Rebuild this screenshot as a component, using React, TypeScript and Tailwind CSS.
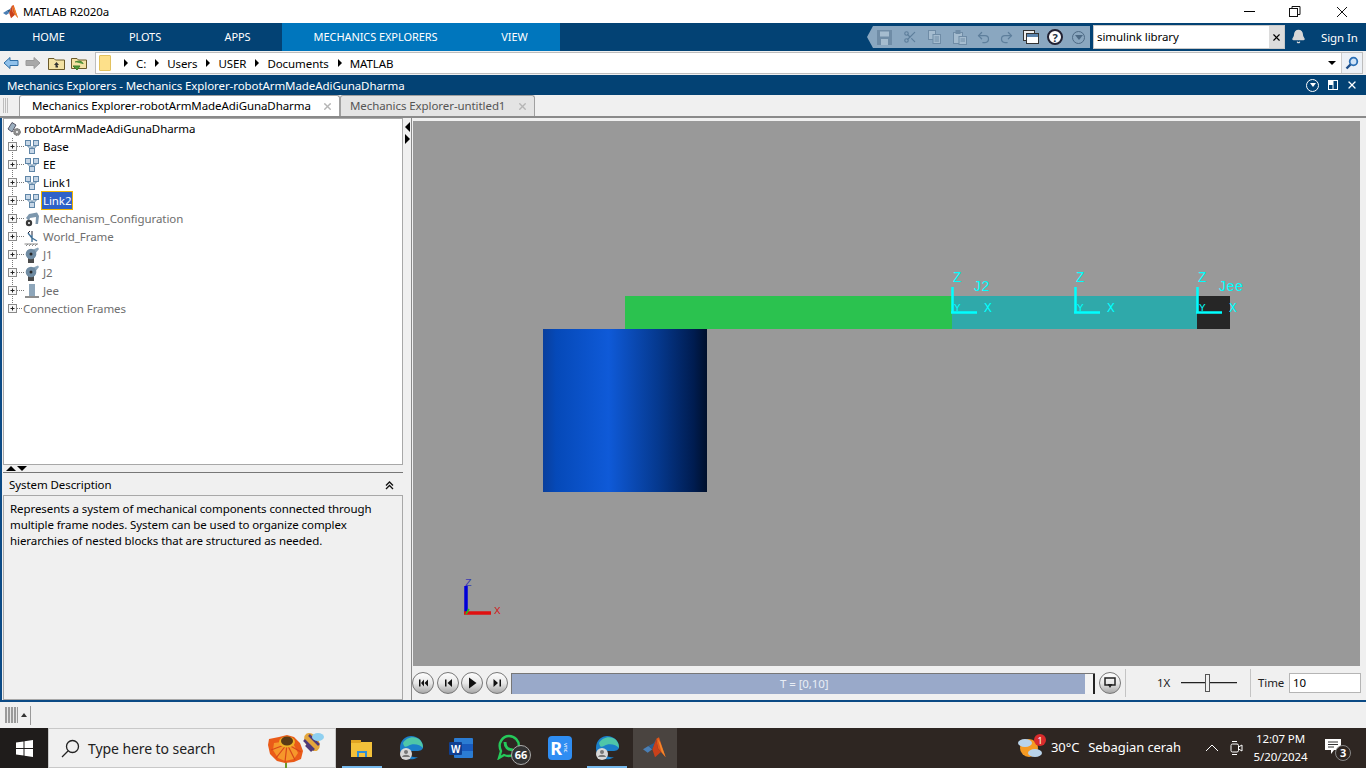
import { Bell, Redo2, Scissors, Undo2, X } from "lucide-react";

const font = { fontFamily: '"Noto Sans", sans-serif' };
const mono = '"Liberation Mono", monospace';

function MatlabLogo({ size = 18 }: { size?: number }) {
  return (
    <svg width={size} height={size} viewBox="0 0 18 18">
      <polygon points="0,10 4,7.5 7,10 3.5,12.5" fill="#4a7fb5" />
      <polygon points="4,7.5 8,5.5 10,2 7,10" fill="#2b5f91" />
      <polygon points="10,2 12,1 17,16 13.5,12 11,9" fill="#e0561b" />
      <polygon points="10,2 11,9 13.5,12 9,16 7,10" fill="#c9401a" />
      <polygon points="11,2 13,5 17,16 14,12" fill="#f08a2c" />
    </svg>
  );
}

function RibbonTab({ label, width, active }: { label: string; width: number; active?: boolean }) {
  return (
    <div
      className={`flex h-full shrink-0 items-center justify-center text-[11px] text-white ${active ? "bg-[#0076bd]" : ""}`}
      style={{ width }}
    >
      {label}
    </div>
  );
}

function TitleBar() {
  return (
    <div className="flex h-[23px] shrink-0 items-center bg-white">
      <div className="ml-[2px] mr-[3px] flex w-[18px] justify-center">
        <MatlabLogo size={16} />
      </div>
      <span className="text-[11.5px] text-black">MATLAB R2020a</span>
      <div className="ml-auto flex h-full items-center text-[#222]">
        <div className="mr-[34px] h-px w-[11px] bg-black" />
        <svg width="12" height="12" viewBox="0 0 12 12" className="mr-[35px]" fill="none" stroke="#111">
          <rect x="0.5" y="2.5" width="8" height="8" />
          <path d="M3 2.5V0.5H11V8.5H8.5" />
        </svg>
        <svg width="12" height="12" viewBox="0 0 12 12" className="mr-[18px]" fill="none" stroke="#111">
          <path d="M1 1L11 11M11 1L1 11" />
        </svg>
      </div>
    </div>
  );
}

function RibbonBar() {
  const qa = "text-[#5e7f9c]";
  return (
    <div className="flex h-[28px] shrink-0 items-stretch bg-[#034274]">
      <RibbonTab label="HOME" width={97} />
      <RibbonTab label="PLOTS" width={96} />
      <RibbonTab label="APPS" width={89} />
      <RibbonTab label="MECHANICS EXPLORERS" width={187} active />
      <RibbonTab label="VIEW" width={91} active />
      <div className="ml-[307px] mt-[3px] flex h-[22px] w-[223px] shrink-0 items-center bg-[#8aa7c0] pl-[10px] [clip-path:polygon(6px_0,100%_0,100%_100%,6px_100%,0_50%)]">
        <svg width="15" height="15" viewBox="0 0 15 15" className="mr-[11px]">
          <path d="M0 0H15V15H0Z" fill="#6f8ca6" />
          <rect x="3" y="1.5" width="9" height="5" fill="#a5bccf" />
          <rect x="4" y="9" width="7" height="6" fill="#a5bccf" />
        </svg>
        <Scissors size={14} className={`${qa} mr-[11px]`} />
        <svg width="13" height="14" viewBox="0 0 13 14" className="mr-[12px]" fill="#a5bccf" stroke="#6f8ca6">
          <rect x="0.5" y="0.5" width="7" height="9" />
          <rect x="5" y="4.5" width="7.5" height="9" />
          <path d="M6.5 7H11M6.5 9H11M6.5 11H11" />
        </svg>
        <svg width="14" height="15" viewBox="0 0 14 15" className="mr-[9px]" fill="#a5bccf" stroke="#6f8ca6">
          <rect x="0.5" y="2.5" width="9" height="11" />
          <rect x="3" y="0.5" width="4" height="3" fill="#6f8ca6" />
          <rect x="6" y="6.5" width="7.5" height="8" />
          <path d="M7.5 9H12M7.5 11H12" />
        </svg>
        <Undo2 size={15} className={`${qa} mr-[8px]`} />
        <Redo2 size={15} className={`${qa} mr-[9px]`} />
        <svg width="16" height="15" viewBox="0 0 16 15" className="mr-[8px]">
          <rect x="0.5" y="0.5" width="11" height="10" fill="#eee" stroke="#333" />
          <rect x="3.5" y="3.5" width="12" height="10" fill="#fff" stroke="#333" />
          <rect x="4" y="4" width="11" height="3" fill="#5b84ad" />
        </svg>
        <div className="mr-[9px] flex size-[16px] items-center justify-center rounded-full border-2 border-[#223] bg-white text-[11px] font-bold leading-none text-[#234]">
          ?
        </div>
        <div className="flex size-[13px] items-center justify-center rounded-full border border-[#4d6a85]">
          <div className="size-0 border-x-[4px] border-t-[5px] border-x-transparent border-t-[#4d6a85]" />
        </div>
      </div>
      <div className="ml-[3px] mt-[2px] flex h-[24px] w-[192px] shrink-0 border border-[#c8c8c8] bg-white">
        <span className="flex-1 pl-[3px] text-[11.5px] leading-[22px] text-black">simulink library</span>
        <div className="flex w-[15px] items-center justify-center bg-[#dcdcdc]">
          <X size={11} strokeWidth={2.5} className="text-black" />
        </div>
      </div>
      <Bell size={15} fill="#d8d8d8" className="ml-[6px] mt-[6px] shrink-0 text-[#d8d8d8]" />
      <span className="ml-[15px] mt-[6px] shrink-0 text-[11.5px] text-white">Sign In</span>
    </div>
  );
}

function AddressBar() {
  return (
    <div className="flex h-[24px] shrink-0 items-center bg-[#f0f0f0]">
      <svg width="16" height="14" viewBox="0 0 16 14" className="ml-[3px]">
        <path d="M1 7L7 1.5V4.5H15V9.5H7V12.5Z" fill="#8fc0ea" stroke="#2f6ea5" />
      </svg>
      <svg width="16" height="14" viewBox="0 0 16 14" className="ml-[6px]">
        <path d="M15 7L9 1.5V4.5H1V9.5H9V12.5Z" fill="#a8a8a8" stroke="#9a9a9a" />
      </svg>
      <svg width="17" height="14" viewBox="0 0 17 14" className="ml-[7px]">
        <path d="M0.5 2.5H6L7.5 4H16.5V13.5H0.5Z" fill="#f3e2a4" stroke="#6b5a2a" />
        <path d="M8.5 6L6 9H7.5V11.5H10V10H9.5V9H11Z" fill="#333" />
      </svg>
      <svg width="17" height="15" viewBox="0 0 17 15" className="ml-[5px]">
        <path d="M1.5 2.5H7L8.5 4H16.5V12.5H1.5Z" fill="#f3e2a4" stroke="#6b5a2a" />
        <path d="M5 6C10 4 13 6 13 8M7 14L3 10H10Z" fill="#4f9a3a" stroke="#3d7d2b" />
      </svg>
      <div className="ml-[8px] flex h-[22px] flex-1 items-center border border-[#bdbdbd] bg-white text-[11.5px] text-black">
        <div className="ml-[3px] mr-[4px] h-[16px] w-[12px] rounded-[1px] border border-[#e3c25f] bg-[#fde08a]" />
        {["C:", "Users", "USER", "Documents", "MATLAB"].map((part) => (
          <div key={part} className="flex items-center">
            <div className="ml-[9px] mr-[8px] size-0 border-y-[4px] border-l-[4px] border-y-transparent border-l-black" />
            <span className="pt-[1px]">{part}</span>
          </div>
        ))}
        <div className="ml-auto mr-[5px] size-0 border-x-[4px] border-t-[4px] border-x-transparent border-t-black" />
        <div className="flex h-full w-[21px] items-center justify-center border-l border-[#ccc] bg-[#ecf1f7]">
          <svg width="14" height="14" viewBox="0 0 14 14" fill="none">
            <circle cx="8.5" cy="5.5" r="3.8" stroke="#2b6fb5" strokeWidth="1.8" fill="#cfe3f7" />
            <path d="M5.5 8.5L1.5 12.5" stroke="#1e4f8a" strokeWidth="2.4" />
          </svg>
        </div>
      </div>
      <div className="w-[3px]" />
    </div>
  );
}

function PanelHeader() {
  return (
    <div className="flex h-[20px] shrink-0 items-center bg-[#034274] pl-[7px] text-[11.5px] text-white">
      <span className="pt-[1px]">Mechanics Explorers - Mechanics Explorer-robotArmMadeAdiGunaDharma</span>
      <div className="ml-auto flex items-center">
        <div className="flex size-[13px] items-center justify-center rounded-full border border-white">
          <div className="size-0 border-x-[3px] border-t-[4px] border-x-transparent border-t-white" />
        </div>
        <svg width="10" height="10" viewBox="0 0 10 10" className="ml-[9px]" fill="none" stroke="#fff">
          <rect x="0.5" y="0.5" width="9" height="9" />
          <path d="M5 0.5V9.5M0.5 4.5H5" />
          <rect x="1" y="1" width="3.5" height="3.5" fill="#fff" />
        </svg>
        <X size={12} strokeWidth={2.5} className="ml-[8px] mr-[8px]" />
      </div>
    </div>
  );
}

function TabStrip() {
  return (
    <div className="flex h-[23px] shrink-0 items-end border-b-2 border-[#8a8a8a] bg-[#f0f0f0]">
      <div className="mb-[3px] ml-[3px] h-[15px] w-[6px] bg-[repeating-linear-gradient(90deg,#bdbdbd_0,#bdbdbd_1px,transparent_1px,transparent_2px)]" />
      <div className="ml-[10px] flex h-[21px] w-[321px] items-center whitespace-nowrap rounded-t-[3px] border border-b-0 border-[#a0a0a0] bg-white pl-[12px] text-[11.5px] text-black">
        <span>Mechanics Explorer-robotArmMadeAdiGunaDharma</span>
        <X size={11} strokeWidth={3} className="ml-auto mr-[6px] text-[#b5b5b5]" />
      </div>
      <div className="flex h-[21px] w-[195px] items-center whitespace-nowrap rounded-t-[3px] border border-b-0 border-[#a0a0a0] bg-[#e4e4e4] pl-[9px] text-[11.5px] text-[#555]">
        <span>Mechanics Explorer-untitled1</span>
        <X size={11} strokeWidth={3} className="ml-auto mr-[6px] text-[#b5b5b5]" />
      </div>
    </div>
  );
}

function Connector({ last, width }: { last?: boolean; width: number }) {
  return (
    <svg width={width} height="18" viewBox={`0 0 ${width} 18`} className="shrink-0">
      <path d={`M8.5 0V${last ? 9 : 18}M13 8.5H${width}`} stroke="#777" strokeDasharray="1 1" />
      <rect x="4.5" y="4.5" width="8" height="8" fill="#f7f7f7" stroke="#8a8a8a" />
      <path d="M6.5 8.5H10.5M8.5 6.5V10.5" stroke="#222" />
    </svg>
  );
}

function FrameIcon() {
  return (
    <svg width="16" height="16" viewBox="0 0 16 16" fill="#c6d6e6" stroke="#5f86a8" className="shrink-0">
      <rect x="1.5" y="1.5" width="5" height="5" />
      <rect x="9.5" y="1.5" width="5" height="5" />
      <rect x="5.5" y="9.5" width="5" height="5" />
      <path d="M4 6.5V8H8V9.5M12 6.5V8H8" fill="none" />
    </svg>
  );
}

function MechIcon() {
  return (
    <svg width="16" height="17" viewBox="0 0 16 17" className="shrink-0">
      <path d="M2 7L5 3L13 1.5L15 5L14 13H11.5L12 6L6 7L5 10" fill="#7d97ad" />
      <circle cx="5" cy="12" r="3.2" fill="#3a3a3a" />
      <circle cx="5" cy="12" r="1" fill="#fff" />
    </svg>
  );
}

function WorldIcon() {
  return (
    <svg width="16" height="17" viewBox="0 0 16 17" className="shrink-0" fill="none">
      <path d="M8 13V6M8 9L13 12M8 9L4 4" stroke="#3f6f96" strokeWidth="1.4" />
      <path d="M8 6L8 2M4 4L6 2" stroke="#223" />
      <path d="M0.5 15H14M2 17L4 15M5 17L7 15M8 17L10 15M11 17L13 15" stroke="#888" />
    </svg>
  );
}

function JointIcon() {
  return (
    <svg width="16" height="17" viewBox="0 0 16 17" className="shrink-0">
      <rect x="4" y="11" width="6" height="5" fill="#4a4a4a" />
      <path d="M8 3L14 0.5L15 2L11 7Z" fill="#8ba5ba" />
      <circle cx="7" cy="7" r="5.3" fill="#6f8ba2" />
      <circle cx="7" cy="7" r="1.5" fill="#262626" />
    </svg>
  );
}

function WeldIcon() {
  return (
    <svg width="16" height="17" viewBox="0 0 16 17" className="shrink-0">
      <rect x="5" y="1" width="6" height="12" fill="#8ea6ba" />
      <rect x="1" y="13" width="14" height="2" fill="#8d8d8d" />
    </svg>
  );
}

function ModelIcon() {
  return (
    <svg width="16" height="16" viewBox="0 0 16 16" className="shrink-0">
      <path d="M2 8L6 1.5L10 4L6 11Z" fill="#9db0c0" stroke="#556" />
      <circle cx="11" cy="11" r="3.4" fill="#8f8f8f" stroke="#666" strokeDasharray="1.5 1" />
      <circle cx="11" cy="11" r="1" fill="#fff" />
    </svg>
  );
}

const rows = [
  { label: "Base", icon: <FrameIcon />, dim: false },
  { label: "EE", icon: <FrameIcon />, dim: false },
  { label: "Link1", icon: <FrameIcon />, dim: false },
  { label: "Link2", icon: <FrameIcon />, dim: false, selected: true },
  { label: "Mechanism_Configuration", icon: <MechIcon />, dim: true },
  { label: "World_Frame", icon: <WorldIcon />, dim: true },
  { label: "J1", icon: <JointIcon />, dim: true },
  { label: "J2", icon: <JointIcon />, dim: true },
  { label: "Jee", icon: <WeldIcon />, dim: true },
];

function Tree() {
  return (
    <div className="h-[347px] w-[400px] shrink-0 border border-[#a8a8a8] bg-white pt-[1px] text-[11.5px] leading-[17px]">
      <div className="flex h-[18px] items-center pl-[2px] text-black">
        <ModelIcon />
        <span className="mb-[1px] ml-[2px]">robotArmMadeAdiGunaDharma</span>
      </div>
      {rows.map((row) => (
        <div key={row.label} className="flex h-[18px] items-center">
          <Connector width={20} />
          {row.icon}
          <span
            className={`mb-[1px] ml-[2px] px-[1px] ${row.dim ? "text-[#6e6e6e]" : "text-black"} ${
              row.selected ? "bg-[#2f62c8] text-white outline outline-1 outline-[#f0b400]" : ""
            }`}
          >
            {row.label}
          </span>
        </div>
      ))}
      <div className="flex h-[18px] items-center text-[#6e6e6e]">
        <Connector last width={19} />
        <span className="mb-[1px]">Connection Frames</span>
      </div>
    </div>
  );
}

function Description() {
  return (
    <div className="flex w-[400px] flex-1 flex-col text-[11.5px] text-black">
      <div className="flex h-[23px] shrink-0 items-center justify-between border-t border-[#777] pl-[6px] pr-[9px] pt-[2px]">
        <span>System Description</span>
        <svg width="9" height="9" viewBox="0 0 9 9" fill="none" stroke="#111" strokeWidth="1.3">
          <path d="M1 4.5L4.5 1L8 4.5M1 8L4.5 4.5L8 8" />
        </svg>
      </div>
      <div className="flex-1 border border-[#a8a8a8] px-[6px] pt-[5px] leading-[16px]">
        Represents a system of mechanical components connected through multiple frame nodes. System can be used to
        organize complex hierarchies of nested blocks that are structured as needed.
      </div>
    </div>
  );
}

function AxisFrame({ x, y, label }: { x: number; y: number; label?: string }) {
  return (
    <g>
      <path d={`M${x + 1.5} ${y + 26}V${y}M${x} ${y + 25.5}H${x + 26}`} stroke="#00ffff" strokeWidth="2.5" fill="none" />
      <text x={x + 2} y={y - 5} fill="#00ffff" fontSize="14" fontFamily={mono}>
        Z
      </text>
      <text x={x + 3} y={y + 24} fill="#00ffff" fontSize="11" fontFamily={mono}>
        Y
      </text>
      <text x={x + 33} y={y + 25} fill="#00ffff" fontSize="13" fontFamily={mono}>
        X
      </text>
      {label && (
        <text x={x + 22} y={y + 4} fill="#00ffff" fontSize="14" fontFamily={mono}>
          {label}
        </text>
      )}
    </g>
  );
}

function Scene() {
  return (
    <svg width="947" height="545" viewBox="0 0 947 545" className="block shrink-0 bg-[#999999]">
      <defs>
        <linearGradient id="cyl" x1="0" x2="1" y1="0" y2="0">
          <stop offset="0" stopColor="#0a3f9c" />
          <stop offset="0.08" stopColor="#0549b8" />
          <stop offset="0.4" stopColor="#0f5ad8" />
          <stop offset="0.7" stopColor="#05398f" />
          <stop offset="0.92" stopColor="#001c50" />
          <stop offset="1" stopColor="#00102c" />
        </linearGradient>
      </defs>
      <rect x="130" y="208" width="164" height="163" fill="url(#cyl)" />
      <rect x="212" y="175" width="327" height="33" fill="#2bc24f" />
      <rect x="539" y="175" width="245" height="33" fill="#2fa9aa" />
      <rect x="784" y="175" width="33" height="33" fill="#262626" />
      <AxisFrame x={538} y={166} label="J2" />
      <AxisFrame x={661} y={166} />
      <AxisFrame x={783} y={166} label="Jee" />
      <path d="M53 465V493" stroke="#0000d8" strokeWidth="3.5" />
      <path d="M51 492H78" stroke="#e01010" strokeWidth="3.5" />
      <path d="M53 493L56 488" stroke="#20c020" strokeWidth="1.5" />
      <text x="52" y="465" fill="#3a3ab0" fontSize="11" fontFamily={mono}>
        Z
      </text>
      <text x="81" y="493" fill="#d02020" fontSize="11" fontFamily={mono}>
        X
      </text>
    </svg>
  );
}

function RoundButton({ kind }: { kind: string }) {
  const glyph: Record<string, string> = {
    first: "M6 6.5H7.5V13.5H6ZM11 6.5V13.5L8 10ZM15 6.5V13.5L11.5 10Z",
    prev: "M7 6.5H8.5V13.5H7ZM14 6V14L9.5 10Z",
    play: "M7 4.5L14.5 10L7 15.5Z",
    next: "M12.5 6.5H14V13.5H12.5ZM6.5 6V14L11 10Z",
  };
  return (
    <div className="size-[22px] shrink-0 rounded-full border border-[#777] bg-[linear-gradient(#fdfdfd,#e8e8e8_50%,#a8a8a8)]">
      <svg width="20" height="20" viewBox="0 0 20 20" fill="#111">
        <path d={glyph[kind]} />
      </svg>
    </div>
  );
}

function Playback() {
  return (
    <div className="flex h-[34px] w-[951px] shrink-0 items-center bg-[#f0f0f0] text-[11.5px]">
      <div className="-ml-[1px] flex shrink-0 gap-[2.5px]">
        <RoundButton kind="first" />
        <RoundButton kind="prev" />
        <RoundButton kind="play" />
        <RoundButton kind="next" />
      </div>
      <div className="ml-[3.5px] flex h-[21px] w-[584px] shrink-0 items-center border-l border-t border-[#777] bg-[#99a9c9]">
        <span className="ml-[268px] text-[#e8edf5]">T = [0,10]</span>
        <div className="ml-auto h-full w-[10px] border-r-2 border-[#222] bg-[#f3f3f3]" />
      </div>
      <div className="ml-[4px] flex size-[22px] shrink-0 items-center justify-center rounded-full border border-[#777] bg-[linear-gradient(#fdfdfd,#e8e8e8_50%,#a8a8a8)]">
        <svg width="12" height="12" viewBox="0 0 12 12">
          <rect x="1" y="1" width="10" height="7" fill="none" stroke="#222" strokeWidth="1.5" />
          <path d="M3.5 7H8.5L6 11Z" fill="#222" />
        </svg>
      </div>
      <div className="ml-[4px] h-[28px] w-px shrink-0 bg-[#c4c4c4]" />
      <span className="ml-[31px] w-[13px] shrink-0 text-[#222]">1X</span>
      <svg width="56" height="20" viewBox="0 0 56 20" className="ml-[11px] shrink-0">
        <path d="M0 9.5H56" stroke="#222" />
        <path d="M0 10.5H56" stroke="#bbb" />
        <rect x="24.5" y="1.5" width="4" height="17" fill="#f0f0f0" stroke="#555" />
      </svg>
      <div className="ml-[13px] h-[28px] w-px shrink-0 bg-[#c4c4c4]" />
      <span className="ml-[7px] w-[26px] shrink-0 text-[#222]">Time</span>
      <div className="ml-[5px] h-[20px] w-[72px] shrink-0 border border-[#b5b5b5] bg-white pl-[3px] leading-[18px] text-black">
        10
      </div>
    </div>
  );
}

function StatusBar() {
  return (
    <div className="flex h-[26px] shrink-0 items-center bg-[#f0f0f0] pl-[5px]">
      <div className="h-[16px] w-[13px] bg-[repeating-linear-gradient(90deg,#9a9a9a_0,#9a9a9a_2px,#e8e8e8_2px,#e8e8e8_3px)]" />
      <div className="ml-[3px] mr-[3px] size-0 border-x-[3px] border-b-[4px] border-x-transparent border-b-[#333]" />
      <div className="h-[19px] w-px bg-[#999]" />
    </div>
  );
}

function EdgeIcon() {
  return (
    <svg width="26" height="26" viewBox="0 0 26 26">
      <path d="M2 13C2 5 8 1 13 1C20 1 25 6 25 12C25 15 22 16 19 16H10C10 20 14 23 20 22C14 27 2 24 2 13Z" fill="#1b7fc9" />
      <path d="M5 8C8 2 17 0 22 5C25 8 25 12 25 13C22 9 14 8 10 11C8 12 6 13 5 8Z" fill="#4fc6a8" />
      <circle cx="8" cy="19" r="6" fill="#d8d8d8" />
      <circle cx="8" cy="17" r="2" fill="#777" />
      <path d="M4 22C5 19 11 19 12 22Z" fill="#777" />
    </svg>
  );
}

function TaskIcon({ children, width, active }: { children: React.ReactNode; width: number; active?: boolean }) {
  return (
    <div className="relative flex h-full shrink-0 items-center justify-center" style={{ width }}>
      {children}
      {active && <div className="absolute inset-x-[4px] bottom-0 h-[2px] bg-[#76b9ed]" />}
    </div>
  );
}

function Taskbar() {
  return (
    <div className="flex h-[40px] shrink-0 items-stretch bg-[#2e2622] text-white">
      <div className="flex w-[48px] shrink-0 items-center justify-center bg-[#1f1c1b]">
        <svg width="17" height="17" viewBox="0 0 17 17" fill="#fff">
          <path d="M0 2.5L7.5 1.4V8H0ZM8.5 1.2L17 0V8H8.5ZM0 9H7.5V15.6L0 14.5ZM8.5 9H17V17L8.5 15.8Z" />
        </svg>
      </div>
      <div className="relative flex w-[288px] shrink-0 items-center border border-[#c8c8c8] bg-[#f0f0f0] pl-[12px] text-[14px] text-[#222]">
        <svg width="19" height="19" viewBox="0 0 19 19" fill="none" stroke="#222" strokeWidth="1.3">
          <circle cx="11.5" cy="7.5" r="6" />
          <path d="M7 12L1 18" />
        </svg>
        <span className="ml-[8px]">Type here to search</span>
        <svg width="60" height="40" viewBox="0 0 60 40" className="absolute left-[218px] top-[-1px]">
          <path d="M19 40V33" stroke="#6a9a2a" strokeWidth="2" />
          <path d="M12 9L20 7L27 9L33 15L36 23L34 31L27 34L18 35L10 33L3 26L1 17L2 11Z" fill="#ea5b18" />
          <path d="M14 14L20 12L26 15L31 25L27 31L18 33L11 30L6 22L7 15Z" fill="#f6972b" />
          <path d="M20 16L4 22M20 16L9 30M20 16L18 34M20 16L28 32M20 16L34 24" stroke="#d8461a" strokeWidth="1.2" />
          <ellipse cx="20" cy="14" rx="8" ry="5.5" fill="#f0b025" />
          <ellipse cx="20" cy="13" rx="6" ry="4.5" fill="#5a3a16" />
          <ellipse cx="45" cy="14" rx="6.5" ry="10" transform="rotate(-35 45 14)" fill="#e4a63c" />
          <path d="M37 12L47 22M42 7L52 17M39 17L45 23" stroke="#4f3a78" strokeWidth="2.6" />
          <ellipse cx="51" cy="9" rx="6" ry="4" fill="#8fd0f0" />
        </svg>
      </div>
      <div className="flex flex-1 items-stretch pl-[2px]">
        <TaskIcon width={48} active>
          <svg width="24" height="24" viewBox="0 0 24 24">
            <path d="M1 4H9L11 6H22V21H1Z" fill="#f3c13a" />
            <rect x="1" y="4" width="10" height="3" fill="#e0a422" />
            <path d="M7 21V15H17V21H15V17H9V21Z" fill="#2f8fd8" />
          </svg>
        </TaskIcon>
        <TaskIcon width={50}>
          <EdgeIcon />
        </TaskIcon>
        <TaskIcon width={50}>
          <svg width="26" height="24" viewBox="0 0 26 24">
            <rect x="6" y="2" width="19" height="20" rx="1" fill="#2b7cd3" />
            <rect x="6" y="8" width="19" height="7" fill="#185abd" />
            <rect x="1" y="6" width="13" height="13" rx="1" fill="#103f91" />
            <text x="3" y="16.5" fontSize="10" fontWeight="700" fill="#fff" fontFamily='"Liberation Sans", sans-serif'>
              W
            </text>
          </svg>
        </TaskIcon>
        <TaskIcon width={50}>
          <div className="relative size-[28px]">
            <svg width="24" height="26" viewBox="0 0 24 26" fill="none" stroke="#25c95a" strokeWidth="2.4">
              <path d="M2 24L4 17C0 9 6 2 12 2C18 2 22 7 22 12C22 19 14 24 7 21Z" />
              <path d="M8 8C8 13 11 16 16 16" strokeWidth="3" />
            </svg>
            <div className="absolute bottom-[-3px] right-[-6px] flex size-[20px] items-center justify-center rounded-full border border-[#aaa] bg-[#333] text-[11px] font-bold text-white">
              66
            </div>
          </div>
        </TaskIcon>
        <TaskIcon width={47}>
          <div className="flex h-[24px] w-[24px] items-center justify-center gap-[1px] rounded-[4px] bg-[#2f8df2] text-white">
            <span className="text-[18px] font-bold leading-none">R</span>
            <span className="text-[6px] leading-[6px] [writing-mode:vertical-rl]">vnc</span>
          </div>
        </TaskIcon>
        <TaskIcon width={48} active>
          <EdgeIcon />
        </TaskIcon>
        <div className="ml-[2px] w-[44px] shrink-0 bg-[#4a4440]">
          <TaskIcon width={44}>
            <MatlabLogo size={24} />
          </TaskIcon>
        </div>
        <div className="ml-auto flex items-center">
          <div className="relative mr-[8px] flex size-[26px] items-center justify-center">
            <svg width="26" height="24" viewBox="0 0 26 24">
              <circle cx="12" cy="12" r="9" fill="#f59a23" />
              <ellipse cx="8" cy="7" rx="7" ry="4" fill="#b9d3ea" />
              <ellipse cx="18" cy="17" rx="7" ry="4" fill="#b9d3ea" />
            </svg>
            <div className="absolute right-[-3px] top-[-1px] flex size-[12px] items-center justify-center rounded-full bg-[#d92c2c] text-[9px] leading-none text-white">
              1
            </div>
          </div>
          <span className="text-[13px]">30°C</span>
          <span className="ml-[9px] text-[13px]">Sebagian cerah</span>
          <svg width="14" height="8" viewBox="0 0 14 8" fill="none" stroke="#fff" className="ml-[24px]">
            <path d="M1 7L7 1L13 7" />
          </svg>
          <svg width="13" height="16" viewBox="0 0 13 16" fill="none" stroke="#fff" className="ml-[11px]">
            <rect x="1" y="4" width="7.5" height="8" rx="1.5" />
            <path d="M8.5 7L12 5V11L8.5 9M2 1.5H7M2 14.5H7" />
          </svg>
          <div className="ml-[4px] flex w-[67px] flex-col items-center text-[11.5px] leading-[18px]">
            <span>12:07 PM</span>
            <span>5/20/2024</span>
          </div>
          <div className="relative ml-[11px] mr-[24px] h-[18px] w-[17px]">
            <svg width="17" height="16" viewBox="0 0 17 16" fill="#fff">
              <path d="M0 0H16V11H9L6 15V11H0Z" />
              <path d="M3 3H13M3 5.5H13M3 8H9" stroke="#333" />
            </svg>
            <div className="absolute bottom-[-4px] right-[-9px] flex size-[16px] items-center justify-center rounded-full border border-[#888] bg-[#2e2622] text-[11px] font-bold">
              3
            </div>
          </div>
        </div>
      </div>
    </div>
  );
}

export default function App() {
  return (
    <div className="flex h-[768px] w-[1366px] flex-col overflow-hidden bg-[#f0f0f0] tracking-[-0.08px]" style={font}>
      <TitleBar />
      <RibbonBar />
      <AddressBar />
      <PanelHeader />
      <TabStrip />
      <div className="flex h-[584px] shrink-0 border-b-2 border-l-2 border-[#0b4a85] bg-[#f0f0f0]">
        <div className="flex w-[402px] shrink-0 flex-col pl-[1px]">
          <Tree />
          <div className="flex h-[7px] shrink-0 items-center pl-[3px]">
            <div className="size-0 border-x-[5px] border-b-[5px] border-x-transparent border-b-black" />
            <div className="ml-[1px] size-0 border-x-[5px] border-t-[5px] border-x-transparent border-t-black" />
          </div>
          <Description />
        </div>
        <div className="flex w-[7px] shrink-0 flex-col items-center gap-[2px] pt-[4px]">
          <div className="size-0 border-y-[5px] border-r-[5px] border-y-transparent border-r-black" />
          <div className="size-0 border-y-[5px] border-l-[5px] border-y-transparent border-l-black" />
        </div>
        <div className="flex w-[953px] shrink-0 flex-col border-l border-[#8a8a8a] pl-[1px] pt-[3px]">
          <Scene />
          <Playback />
        </div>
      </div>
      <StatusBar />
      <Taskbar />
    </div>
  );
}
